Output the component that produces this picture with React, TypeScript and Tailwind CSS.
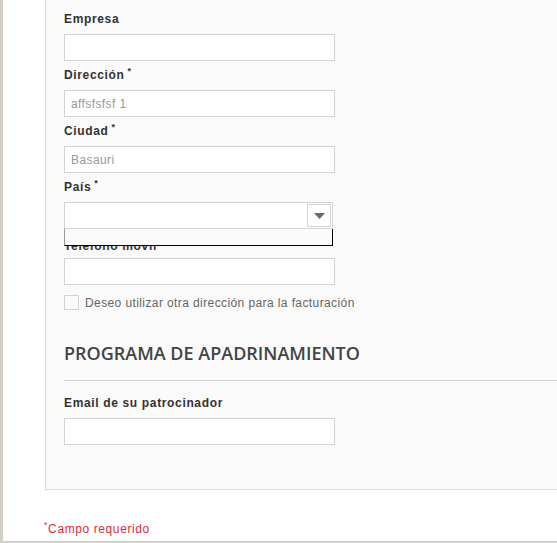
import type { ReactNode } from "react";

const labelCls =
  "block h-[16px] pt-[1px] font-['Liberation_Sans',Arial,sans-serif] text-[12px] leading-[16px] font-bold tracking-[0.65px] text-[#333333]";
const inputCls =
  "block h-[27px] w-[271px] border border-[#d3d3d3] bg-white px-[6px] font-['Liberation_Sans',Arial,sans-serif] text-[12px] tracking-[0.4px] text-[#999999] outline-none";

function Req() {
  return <span className="ml-[3px] align-super text-[9px] leading-none font-bold">*</span>;
}

function Field({
  label,
  required,
  value,
}: {
  label: string;
  required?: boolean;
  value?: string;
}) {
  return (
    <div className="flex flex-col gap-[8px]">
      <label className={labelCls}>
        {label}
        {required && <Req />}
      </label>
      <input className={inputCls} defaultValue={value} />
    </div>
  );
}

function CountrySelect({ children }: { children: ReactNode }) {
  return (
    <div className="flex flex-col gap-[8px]">
      <label className={labelCls}>
        País
        <Req />
      </label>
      <div className="relative w-[269px]">
        <div className="flex h-[27px] w-[269px] items-center justify-end border border-[#d3d3d3] bg-white pr-[1px]">
          <div className="flex h-[23px] w-[24px] items-center justify-center border border-[#d3d3d3] bg-white">
            <svg width="11" height="6" viewBox="0 0 11 6">
              <polygon points="0,0 11,0 5.5,6" fill="#6b6b6b" />
            </svg>
          </div>
        </div>
        {children}
      </div>
    </div>
  );
}

export default function App() {
  return (
    <div className="flex h-[543px] w-[557px] flex-col overflow-hidden border-b-[2px] border-l-[3px] border-[#d4d0c8] bg-white pl-[42px]">
      <div className="flex h-[490px] shrink-0 flex-col border-b border-l border-[#d9d9d9] bg-[#fafafa] pl-[18px] pt-[10px]">
        <div className="flex flex-col gap-[5px]">
          <Field label="Empresa" />
          <Field label="Dirección" required value="affsfsfsf 1" />
          <Field label="Ciudad" required value="Basauri" />
          <CountrySelect>
            {/* open, empty options list lying over the next label */}
            <div className="absolute inset-x-0 top-full z-10 h-[17px] border-x border-b border-b-black border-l-[#9a9a9a] border-r-black bg-[#fbfbfb]" />
          </CountrySelect>
          <div className="flex flex-col gap-[5px] pt-[3px]">
            <label className={labelCls}>Teléfono móvil</label>
            <input className={inputCls} />
          </div>
        </div>

        <div className="mt-[10px] flex h-[16px] items-start gap-[6px]">
          <span className="block h-[15px] w-[15px] border border-[#d3d3d3] bg-[#fafafa]" />
          <span className="font-['Liberation_Sans',Arial,sans-serif] text-[12px] leading-[16px] tracking-[0.4px] text-[#666666]">
            Deseo utilizar otra dirección para la facturación
          </span>
        </div>

        <h2 className="mt-[30px] border-b border-[#d3d3d3] pb-[15px] font-['Open_Sans',sans-serif] text-[18px] font-semibold leading-[24px] text-[#444444]">
          PROGRAMA DE APADRINAMIENTO
        </h2>

        <div className="mt-[13px]">
          <Field label="Email de su patrocinador" />
        </div>
      </div>

      <p className="-ml-[1px] mt-[31px] h-[16px] font-['Liberation_Sans',Arial,sans-serif] text-[12px] leading-[16px] tracking-[0.6px] text-[#e3263b]">
        <span className="align-super text-[9px] leading-none">*</span>Campo requerido
      </p>
    </div>
  );
}
